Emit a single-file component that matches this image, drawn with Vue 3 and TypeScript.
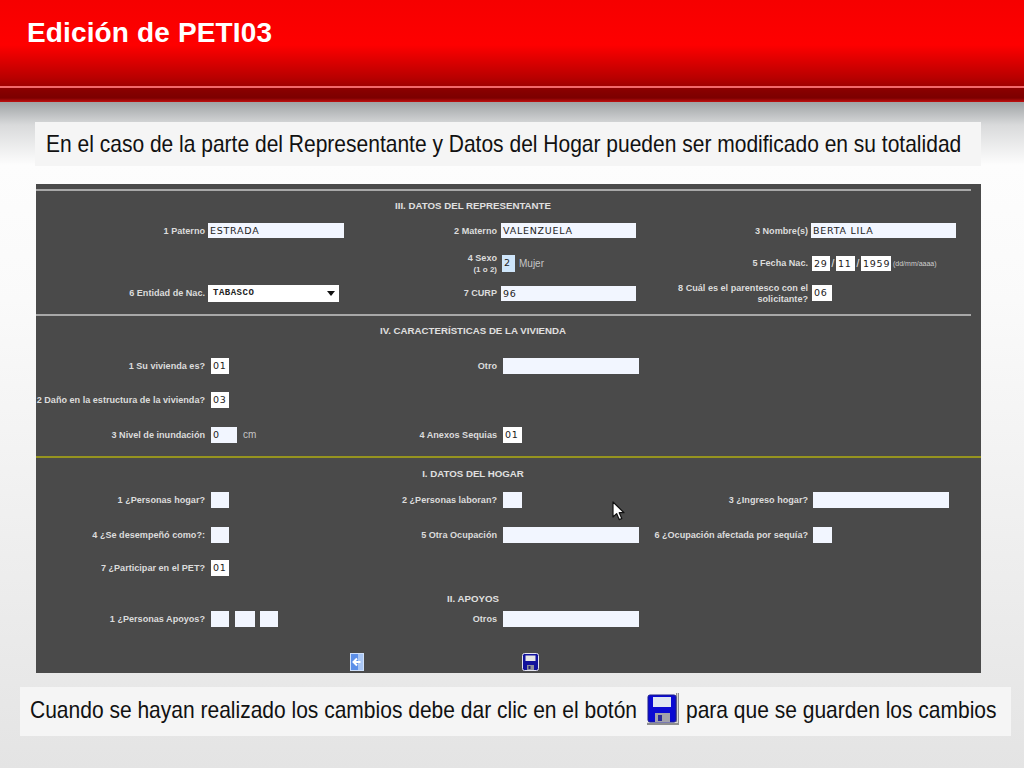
<script setup lang="ts">
interface Field { t?: string; w: number; h?: number; ml?: number; kind?: string }
interface Note { note: string; cls: string; ml?: number }
interface Group { col: number; label?: string[]; fields: (Field | Note)[]; select?: boolean }
interface Row { type: 'line' | 'olive' | 'title' | 'row'; h: number; mt: number; text?: string; groups?: Group[] }

const rows: Row[] = [
  { type: 'line', h: 2, mt: 5 },
  { type: 'title', h: 28, mt: 0, text: 'III. DATOS DEL REPRESENTANTE' },
  { type: 'row', h: 23, mt: 0, groups: [
    { col: 1, label: ['1 Paterno'], fields: [{ t: 'ESTRADA', w: 136 }] },
    { col: 2, label: ['2 Materno'], fields: [{ t: 'VALENZUELA', w: 135 }] },
    { col: 3, label: ['3 Nombre(s)'], fields: [{ t: 'BERTA LILA', w: 145 }] },
  ] },
  { type: 'row', h: 30, mt: 6, groups: [
    { col: 2, label: ['4 Sexo', '(1 o 2)'], fields: [{ t: '2', w: 13, h: 17, ml: 1, kind: 'sky' }, { note: 'Mujer', cls: 'plain', ml: 4 }] },
    { col: 3, label: ['5 Fecha Nac.'], fields: [
      { t: '29', w: 18, ml: 1, kind: 'white' }, { note: '/', cls: 'plain slash' },
      { t: '11', w: 19, kind: 'white' }, { note: '/', cls: 'plain slash' },
      { t: '1959', w: 30, kind: 'white' }, { note: '(dd/mm/aaaa)', cls: 'tiny', ml: 2 },
    ] },
  ] },
  { type: 'row', h: 30, mt: 0, groups: [
    { col: 1, label: ['6 Entidad de Nac.'], select: true, fields: [] },
    { col: 2, label: ['7 CURP'], fields: [{ t: '96', w: 135 }] },
    { col: 3, label: ['8 Cuál es el parentesco con el', 'solicitante?'], fields: [{ t: '06', w: 20, h: 16, ml: 1, kind: 'white' }] },
  ] },
  { type: 'line', h: 2, mt: 6 },
  { type: 'title', h: 28, mt: 0, text: 'IV. CARACTERÍSTICAS DE LA VIVIENDA' },
  { type: 'row', h: 34, mt: 5, groups: [
    { col: 1, label: ['1 Su vivienda es?'], fields: [{ t: '01', w: 18, h: 16, ml: 3, kind: 'white' }] },
    { col: 2, label: ['Otro'], fields: [{ w: 136, h: 16, ml: 2 }] },
  ] },
  { type: 'row', h: 34, mt: 0, groups: [
    { col: 1, label: ['2 Daño en la estructura de la vivienda?'], fields: [{ t: '03', w: 18, h: 16, ml: 3, kind: 'white' }] },
  ] },
  { type: 'row', h: 35, mt: 0, groups: [
    { col: 1, label: ['3 Nivel de inundación'], fields: [{ t: '0', w: 26, h: 16, ml: 3 }, { note: 'cm', cls: 'plain', ml: 6 }] },
    { col: 2, label: ['4 Anexos Sequias'], fields: [{ t: '01', w: 19, h: 16, ml: 2, kind: 'white' }] },
  ] },
  { type: 'olive', h: 2, mt: 4 },
  { type: 'title', h: 24, mt: 3, text: 'I. DATOS DEL HOGAR' },
  { type: 'row', h: 30, mt: 0, groups: [
    { col: 1, label: ['1 ¿Personas hogar?'], fields: [{ w: 18, h: 16, ml: 3 }] },
    { col: 2, label: ['2 ¿Personas laboran?'], fields: [{ w: 19, h: 16, ml: 2 }] },
    { col: 3, label: ['3 ¿Ingreso hogar?'], fields: [{ w: 136, h: 16, ml: 2 }] },
  ] },
  { type: 'row', h: 30, mt: 5, groups: [
    { col: 1, label: ['4 ¿Se desempeñó como?:'], fields: [{ w: 18, h: 16, ml: 3 }] },
    { col: 2, label: ['5 Otra Ocupación'], fields: [{ w: 136, h: 16, ml: 2 }] },
    { col: 3, label: ['6 ¿Ocupación afectada por sequía?'], fields: [{ w: 19, h: 16, ml: 2 }] },
  ] },
  { type: 'row', h: 30, mt: 3, groups: [
    { col: 1, label: ['7 ¿Participar en el PET?'], fields: [{ t: '01', w: 18, h: 16, ml: 3, kind: 'white' }] },
  ] },
  { type: 'title', h: 24, mt: 3, text: 'II. APOYOS' },
  { type: 'row', h: 17, mt: 0, groups: [
    { col: 1, label: ['1 ¿Personas Apoyos?'], fields: [{ w: 18, h: 16, ml: 3 }, { w: 20, h: 16, ml: 6 }, { w: 18, h: 16, ml: 5 }] },
    { col: 2, label: ['Otros'], fields: [{ w: 136, h: 16, ml: 2 }] },
  ] },
]

function isNote(f: Field | Note): f is Note {
  return 'note' in f
}
function fieldStyle(f: Field) {
  return { width: f.w + 'px', height: (f.h ?? 15) + 'px', marginLeft: (f.ml ?? 0) + 'px' }
}
</script>

<template>
  <div class="slide">
    <header class="banner">
      <h1>Edición de PETI03</h1>
    </header>

    <div class="note top">
      <span class="cond w916">En el caso de la parte del Representante y Datos del Hogar pueden ser modificado en su totalidad</span>
    </div>

    <section class="panel">
      <template v-for="(r, i) in rows" :key="i">
        <div v-if="r.type === 'line'" class="rule" :style="{ marginTop: r.mt + 'px' }"></div>
        <div v-else-if="r.type === 'olive'" class="rule olive" :style="{ marginTop: r.mt + 'px' }"></div>
        <h2 v-else-if="r.type === 'title'" class="sec" :style="{ height: r.h + 'px', marginTop: r.mt + 'px' }">{{ r.text }}</h2>
        <div v-else class="row" :style="{ height: r.h + 'px', marginTop: r.mt + 'px' }">
          <div v-for="g in r.groups" :key="g.col" class="group" :class="'g' + g.col">
            <div class="lab">
              <span v-for="l in g.label" :key="l" :class="{ sub: l.startsWith('(') }">{{ l }}</span>
            </div>
            <div v-if="g.select" class="select">
              <span>TABASCO</span>
              <i class="caret"></i>
            </div>
            <template v-for="(f, k) in g.fields" :key="k">
              <span v-if="isNote(f)" :class="f.cls" :style="{ marginLeft: (f.ml ?? 0) + 'px' }">{{ f.note }}</span>
              <span v-else class="field" :class="f.kind" :style="fieldStyle(f)">{{ f.t }}</span>
            </template>
          </div>
        </div>
      </template>

      <div class="actions">
        <svg class="back" width="14" height="18" viewBox="0 0 14 18">
          <rect x="0.5" y="0.5" width="13" height="17" fill="#5c8fe8" stroke="#cfe0fa" />
          <rect x="8" y="1" width="5" height="16" fill="#a9c6f4" />
          <path d="M10.5 9H4M7 5.5 3.5 9 7 12.5" fill="none" stroke="#fff" stroke-width="2" />
        </svg>
        <svg class="save" width="17" height="18" viewBox="0 0 17 18">
          <rect x="0.5" y="0.5" width="16" height="17" rx="2" fill="#12129c" stroke="#e4e4f0" />
          <rect x="3.5" y="2.5" width="10" height="5.5" fill="#e6e6e6" />
          <rect x="5" y="12" width="7" height="5" fill="#8d8d9a" />
          <rect x="6.5" y="13" width="2" height="3" fill="#20207a" />
        </svg>
      </div>

      <svg class="cursor" width="13" height="20" viewBox="0 0 13 20">
        <path d="M1 1v15l3.6-3.4 2.6 6 2.6-1.1-2.6-5.8H12Z" fill="#fff" stroke="#111" stroke-width="1.2" stroke-linejoin="round" />
      </svg>
    </section>

    <div class="note bottom">
      <span class="cond w607">Cuando se hayan realizado los cambios debe dar clic en el botón</span>
      <svg class="disk" width="33" height="33" viewBox="0 0 33 33">
        <path d="M29 0h3v32H0v-3h29Z" fill="#8f8f8f" />
        <path d="M30 0h1v30H0v-1h30Z" fill="#d8d8d8" />
        <rect x="1" y="2" width="28" height="27" rx="2" fill="#0a0ad2" stroke="#1c1c88" />
        <rect x="6" y="4" width="18" height="10" fill="#dfe6f2" />
        <rect x="8" y="20" width="15" height="9" fill="#a2a2aa" />
        <rect x="11" y="22" width="4" height="6" fill="#2a2a9a" />
      </svg>
      <span class="cond w311">para que se guarden los cambios</span>
    </div>
  </div>
</template>

<style scoped>
.slide {
  position: relative;
  width: 1024px;
  height: 768px;
  overflow: hidden;
  display: flex;
  flex-direction: column;
  align-items: flex-start;
  font-family: "Liberation Sans", Arial, sans-serif;
  background: linear-gradient(#9fa3a5 102px, #d9dadb 125px, #fdfdfd 165px, #fafafa 300px, #e4e4e4 768px);
}
.banner {
  width: 100%;
  height: 102px;
  flex: none;
  box-sizing: border-box;
  padding: 16px 0 0 27px;
  background: linear-gradient(#f60000 0, #fe0000 45px, #b80000 78px, #a00000 86px, #f2686a 86px, #f2686a 88px, #8c0000 88px, #7c0000 98px, #c01010 102px);
}
h1 {
  margin: 0;
  font-size: 28px;
  line-height: 33px;
  letter-spacing: 0.14px;
  font-weight: 700;
  color: #fff;
}
.note {
  box-sizing: border-box;
  background: #f5f5f5;
  color: #111;
  font-size: 24px;
  white-space: nowrap;
}
.cond {
  display: block;
  flex: none;
  transform: scaleX(0.875);
  transform-origin: left center;
}
.w916 { width: 916px; }
.w607 { width: 607px; }
.w311 { width: 311px; }
.top {
  width: 946px;
  height: 44px;
  margin: 20px 0 0 35px;
  padding-left: 11px;
  line-height: 44px;
}
.panel {
  position: relative;
  flex: none;
  width: 945px;
  height: 489px;
  margin: 18px 0 0 36px;
  overflow: hidden;
  background: #4a4a4a;
}
.rule {
  width: 935px;
  height: 2px;
  background: #a8a8a8;
}
.olive {
  width: 945px;
  background: #96941f;
}
.sec {
  margin: 0;
  display: flex;
  align-items: center;
  justify-content: center;
  width: 874px;
  font-size: 9.7px;
  font-weight: 700;
  color: #e0e0e0;
}
.row {
  display: grid;
  grid-template-columns: 359px 255px 331px;
  align-items: center;
}
.group {
  display: flex;
  align-items: center;
  white-space: nowrap;
}
.g1 { grid-column: 1; }
.g2 { grid-column: 2; }
.g3 { grid-column: 3; }
.lab {
  flex: none;
  display: flex;
  flex-direction: column;
  align-items: flex-end;
  padding-top: 2px;
  text-align: right;
  font-size: 9.1px;
  line-height: 11.5px;
  font-weight: 700;
  color: #dcdcdc;
}
.g1 .lab { width: 169px; margin-right: 3px; }
.g2 .lab { width: 102px; margin-right: 4px; }
.g3 .lab { width: 158px; margin-right: 3px; }
.sub { font-size: 8px; }
.field {
  flex: none;
  box-sizing: border-box;
  display: block;
  padding-left: 2px;
  overflow: hidden;
  background: #f2f6ff;
  color: #222;
  font-family: "DejaVu Sans", sans-serif;
  font-size: 9.5px;
  line-height: 15px;
  letter-spacing: 0.75px;
}
.white { background: #fff; }
.sky { background: #cfe6fb; }
.plain {
  color: #c4c4c4;
  font-size: 10px;
}
.slash {
  width: 6px;
  text-align: center;
  color: #eee;
}
.tiny {
  color: #cfcfcf;
  font-size: 7px;
}
.select {
  flex: none;
  box-sizing: border-box;
  width: 131px;
  height: 17px;
  padding-left: 5px;
  display: flex;
  align-items: center;
  justify-content: space-between;
  background: #fff;
  color: #222;
  font-family: "Liberation Mono", monospace;
  font-size: 9px;
  letter-spacing: 0.5px;
  font-weight: 700;
}
.caret {
  width: 0;
  height: 0;
  margin-right: 4px;
  border: 4.5px solid transparent;
  border-top: 5px solid #111;
  border-bottom: 0;
}
.actions {
  display: flex;
  align-items: center;
  margin-top: 26px;
  padding-left: 314px;
}
.save { margin-left: 158px; }
.cursor {
  position: absolute;
  left: 576px;
  top: 317px;
}
.bottom {
  flex: none;
  width: 991px;
  height: 49px;
  margin: 14px 0 0 20px;
  padding: 0 0 4px 10px;
  display: flex;
  align-items: center;
}
.disk { margin: 0 6px 0 10px; flex: none; }
</style>
